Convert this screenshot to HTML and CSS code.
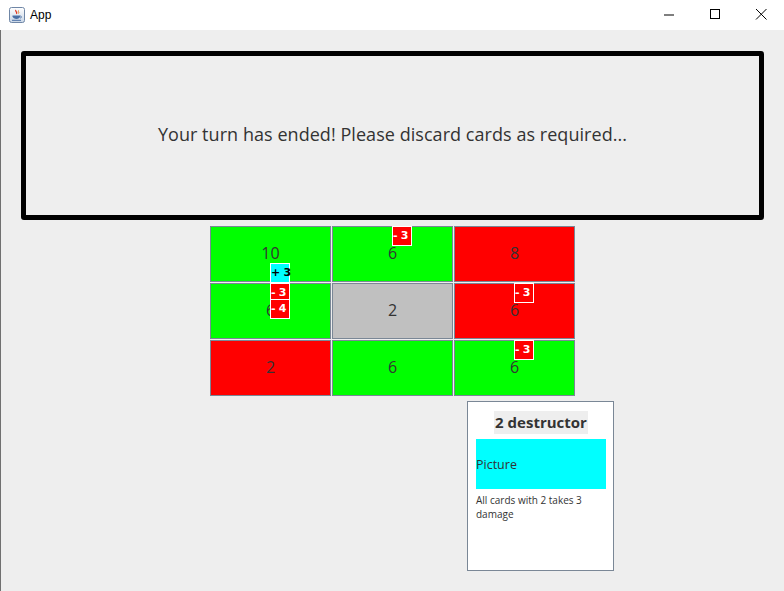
FILE: index.html
```html
<!DOCTYPE html>
<html>
<head>
<meta charset="utf-8">
<link rel="stylesheet" href="styles.css">
</head>
<body>
<div class="titlebar">
  <div class="tb-left">
    <svg class="app-icon" width="16" height="16" viewBox="0 0 16 16">
      <defs>
        <linearGradient id="ig" x1="0" y1="0" x2="0" y2="1">
          <stop offset="0" stop-color="#ffffff"/>
          <stop offset="1" stop-color="#c9d6e6"/>
        </linearGradient>
      </defs>
      <rect x="0.5" y="0.5" width="15" height="15" rx="2" fill="url(#ig)" stroke="#6f86a6"/>
      <path d="M7 3 C5.5 4.5 9 5 7.5 7" stroke="#e0301e" stroke-width="1.2" fill="none"/>
      <path d="M9.5 3.5 C8.5 4.5 10.5 5 9.5 6.5" stroke="#e07a1e" stroke-width="1" fill="none"/>
      <path d="M3.5 8.5 H11 V9.5 C11 11 9.5 12 7.5 12 C5.5 12 4 11 3.5 9.5 Z" fill="#4a6fa5"/>
      <path d="M11 9 C13 9 13 11 11 11" stroke="#4a6fa5" stroke-width="0.9" fill="none"/>
      <rect x="3" y="12.8" width="9" height="1" fill="#4a6fa5"/>
    </svg>
    <span class="app-title">App</span>
  </div>
  <div class="tb-controls">
    <svg class="ctl" width="46" height="30" viewBox="0 0 46 30"><rect x="18" y="14.5" width="10" height="1" fill="#000"/></svg>
    <svg class="ctl" width="46" height="30" viewBox="0 0 46 30"><rect x="18.5" y="9.5" width="9" height="9" fill="none" stroke="#000"/></svg>
    <svg class="ctl" width="46" height="30" viewBox="0 0 46 30"><path d="M18 9 L28.5 19.5 M28.5 9 L18 19.5" stroke="#000" stroke-width="1"/></svg>
  </div>
</div>
<div class="content">
  <div class="message-box">
    <span class="message">Your turn has ended! Please discard cards as required...</span>
  </div>
  <div class="board">
    <div class="cell green">10</div>
    <div class="cell green">6</div>
    <div class="cell red">8</div>
    <div class="cell green">6</div>
    <div class="cell grey">2</div>
    <div class="cell red">6</div>
    <div class="cell red">2</div>
    <div class="cell green">6</div>
    <div class="cell green">6</div>

    <div class="badge cyan b1">+ 3</div>
    <div class="badge b2">- 3</div>
    <div class="badge b3">- 4</div>
    <div class="badge b4">- 3</div>
    <div class="badge b5">- 3</div>
    <div class="badge b6">- 3</div>
  </div>
  <div class="card">
    <div class="card-title"><span>2 destructor</span></div>
    <div class="card-picture">Picture</div>
    <div class="card-desc">All cards with 2 takes 3 damage</div>
  </div>
</div>
</body>
</html>
```
FILE: styles.css
```css
html, body {
  margin: 0;
  padding: 0;
  width: 784px;
  height: 591px;
  overflow: hidden;
  background: #eeeeee;
  font-family: "Open Sans", "Noto Sans", sans-serif;
}

.titlebar {
  height: 30px;
  background: #ffffff;
  display: flex;
  justify-content: space-between;
  align-items: center;
}

.tb-left {
  display: flex;
  align-items: center;
  padding-left: 9px;
}

.app-icon {
  display: block;
}

.app-title {
  font-family: "Liberation Sans", Arial, sans-serif;
  font-size: 12px;
  color: #000;
  margin-left: 5px;
}

.tb-controls {
  display: flex;
}

.ctl {
  display: block;
}

.content {
  height: 561px;
  border-left: 1px solid #707070;
  box-sizing: border-box;
  padding-top: 21px;
  padding-left: 20px;
}

.message-box {
  width: 743px;
  height: 169px;
  box-sizing: border-box;
  border: 5px solid #000;
  border-radius: 3px;
  display: flex;
  align-items: center;
  justify-content: center;
}

.message {
  font-size: 18px;
  color: #333333;
  letter-spacing: 0.05px;
  margin-top: -3px;
}

.board {
  position: relative;
  margin-top: 6px;
  margin-left: 189px;
  display: grid;
  grid-template-columns: repeat(3, 121px);
  grid-template-rows: repeat(3, 56px);
  gap: 1px;
  width: 365px;
}

.cell {
  box-sizing: border-box;
  border: 1px solid #7a8796;
  display: flex;
  align-items: center;
  justify-content: center;
  font-size: 16px;
  color: #333333;
  padding-bottom: 2px;
}

.green { background: #00ff00; }
.red { background: #ff0000; }
.grey { background: #c0c0c0; }

.badge {
  position: absolute;
  width: 20px;
  height: 20px;
  box-sizing: border-box;
  border: 1px solid #ffffff;
  background: #ff0000;
  color: #ffffff;
  font-family: "DejaVu Sans", sans-serif;
  font-weight: bold;
  font-size: 11px;
  line-height: 18px;
  white-space: nowrap;
  letter-spacing: -0.3px;
}

.badge.cyan {
  background: #00ffff;
  color: #000000;
}

.b1 { left: 60px; top: 37px; }
.b2 { left: 60px; top: 57px; }
.b3 { left: 60px; top: 73px; }
.b4 { left: 182px; top: 0px; }
.b5 { left: 304px; top: 57px; }
.b6 { left: 304px; top: 114px; }

.card {
  margin-top: 5px;
  margin-left: 446px;
  width: 147px;
  height: 170px;
  box-sizing: border-box;
  border: 1px solid #7a8796;
  background: #ffffff;
  padding: 9px 7px 0 8px;
}

.card-title {
  text-align: center;
}

.card-title span {
  display: inline-block;
  background: #eeeeee;
  font-weight: bold;
  font-size: 15px;
  color: #333333;
  line-height: 23px;
  padding: 0 1px;
}

.card-picture {
  margin-top: 5px;
  height: 50px;
  background: #00ffff;
  display: flex;
  align-items: center;
  font-size: 12.5px;
  color: #333333;
}

.card-desc {
  margin-top: 4px;
  font-size: 10px;
  line-height: 14px;
  color: #333333;
}
```
